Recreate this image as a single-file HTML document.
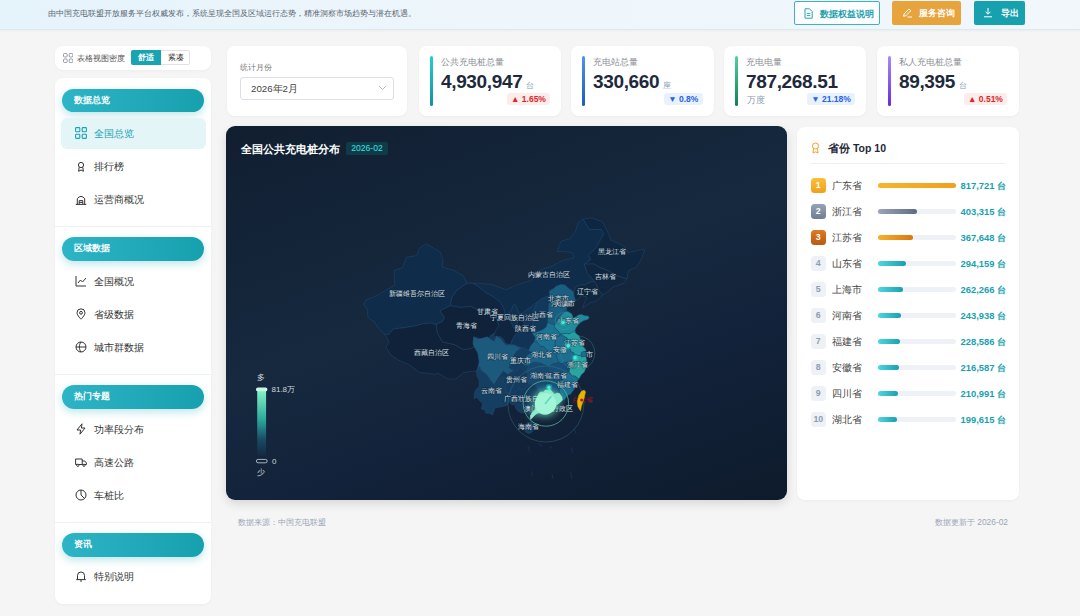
<!DOCTYPE html>
<html><head><meta charset="utf-8">
<style>
*{margin:0;padding:0;box-sizing:border-box}
html,body{width:1080px;height:616px;overflow:hidden;background:#f5f5f5;font-family:"Liberation Sans",sans-serif;position:relative}
.abs{position:absolute}
.topbar{left:0;top:0;width:1080px;height:30px;background:linear-gradient(90deg,#e5f3fb,#eef6fb 45%,#f1f7fb);border-bottom:1px solid #dae9f2;box-shadow:0 1px 3px rgba(0,0,0,.04)}
.topbar .msg{left:48px;top:8px;font-size:8.3px;color:#5a6472;white-space:nowrap;line-height:11px}
.btn{top:1px;height:23.5px;border-radius:2px;font-size:8.5px;font-weight:bold;line-height:25px;white-space:nowrap}
.b1{left:794px;width:86px;border:1px solid #3fb2bd;background:#fbfdfe;color:#1e9fad}
.b2{left:892px;width:69px;background:#e7a33c;color:#fff}
.b3{left:974px;width:51px;background:#17a1ae;color:#fff}
.card{background:#fff;border-radius:8px;box-shadow:0 1px 3px rgba(0,0,0,.04)}
.side-item{left:0;width:156px;height:31px}
.side-item .ic{position:absolute;left:20px;top:9px;width:12px;height:12px}
.side-item .tx{position:absolute;left:39px;top:0;line-height:31px;font-size:10px;color:#333}
.pill{left:7px;width:142px;height:23.5px;border-radius:12px;background:linear-gradient(90deg,#2db4c6,#17a0ae);box-shadow:0 3px 8px rgba(23,160,174,.28);color:#fff;font-size:8.5px;font-weight:bold;line-height:23.5px;padding-left:12px}
.sep{left:0;width:156px;height:1px;background:#eef1f4}
.stat .bar{position:absolute;left:11px;top:10px;width:2.5px;height:49.5px;border-radius:2px}
.stat .lbl{position:absolute;left:22px;top:10px;font-size:9px;color:#8b8f96;line-height:12px;white-space:nowrap}
.stat .num{position:absolute;left:22px;top:23.6px;font-size:19px;font-weight:bold;color:#1e293b;line-height:24px;white-space:nowrap;letter-spacing:-0.35px}
.stat .unit{font-size:8px;color:#8aa0b6;font-weight:normal;margin-left:4px;letter-spacing:0}
.stat .badge{position:absolute;top:47px;height:12px;border-radius:3px;font-size:8.5px;font-weight:bold;line-height:12px;text-align:center;white-space:nowrap}
.up{background:#fdecec;color:#dc2626}
.down{background:#e9f1fd;color:#2563eb}
.row{left:13px;width:196px;height:16px}
.rk{position:absolute;left:.6px;top:-.2px;width:15.4px;height:15.4px;border-radius:3.5px;font-size:8.8px;font-weight:bold;text-align:center;line-height:15.4px}
.pn{position:absolute;left:22px;top:0;font-size:9.5px;color:#444;line-height:15px;white-space:nowrap}
.trk{position:absolute;left:68px;top:4.6px;width:77.5px;height:5.8px;border-radius:3px;background:#eef2f7}
.fil{position:absolute;left:0;top:0;height:5.8px;border-radius:3px}
.val{position:absolute;right:0;top:0;font-size:9.4px;font-weight:bold;color:#17a2b0;line-height:15px;white-space:nowrap}
</style></head>
<body>
<!-- top bar -->
<div class="abs topbar">
  <div class="abs msg">由中国充电联盟开放服务平台权威发布，系统呈现全国及区域运行态势，精准洞察市场趋势与潜在机遇。</div>
  <div class="abs btn b1"><svg class="abs" style="left:9px;top:6px" width="9" height="11" viewBox="0 0 9 11"><path d="M1 .8h4.5L8.2 3.5v6.7H1z" fill="none" stroke="#2aa7b4" stroke-width="1"/><path d="M2.8 5.5h3.5M2.8 7.5h3.5" stroke="#2aa7b4" stroke-width=".9"/></svg><span class="abs" style="left:25px;top:0">数据权益说明</span></div>
  <div class="abs btn b2"><svg class="abs" style="left:10px;top:6px" width="11" height="11" viewBox="0 0 11 11"><path d="M1.5 9.2l.5-2.2L7 2l1.8 1.8-5 5z" fill="none" stroke="#fff" stroke-width="1"/><path d="M5.5 10h4.5" stroke="#fff" stroke-width="1"/></svg><span class="abs" style="left:27px;top:0">服务咨询</span></div>
  <div class="abs btn b3"><svg class="abs" style="left:9px;top:6px" width="10" height="11" viewBox="0 0 10 11"><path d="M5 1v6M2.6 4.8L5 7.2l2.4-2.4M1 9.8h8" fill="none" stroke="#fff" stroke-width="1"/></svg><span class="abs" style="left:27px;top:0">导出</span></div>
</div>

<!-- sidebar toggle -->
<div class="abs card" style="left:55px;top:46px;width:156px;height:24px">
  <svg class="abs" style="left:7.5px;top:7.3px" width="10.5" height="10" viewBox="0 0 10.5 10"><g fill="none" stroke="#8a909a" stroke-width=".9"><rect x=".5" y=".5" width="3.7" height="3.5" rx="1"/><rect x="6.2" y=".5" width="3.7" height="3.5" rx="1"/><rect x=".5" y="6" width="3.7" height="3.5" rx="1"/><rect x="6.2" y="6" width="3.7" height="3.5" rx="1"/></g></svg>
  <div class="abs" style="left:22px;top:6.5px;font-size:8px;color:#555;line-height:12px;white-space:nowrap">表格视图密度</div>
  <div class="abs" style="left:76px;top:4px;width:59px;height:15px;border:1px solid #dfe3e8;border-radius:2px;background:#fff"></div>
  <div class="abs" style="left:76px;top:4px;width:30px;height:15px;background:#1aa3b1;border-radius:2px 0 0 2px;color:#fff;font-size:8px;font-weight:bold;line-height:15.5px;text-align:center">舒适</div>
  <div class="abs" style="left:106px;top:4px;width:29px;height:15px;color:#333;font-size:8px;line-height:15px;text-align:center">紧凑</div>
</div>

<!-- sidebar nav -->
<div class="abs card" style="left:55px;top:78px;width:156px;height:526px">
  <div class="abs pill" style="top:10.5px">数据总览</div>
  <div class="abs" style="left:6px;top:40px;width:145px;height:31px;border-radius:6px;background:#e4f5f8"></div>
  <div class="abs side-item" style="top:40px"><svg class="ic" viewBox="0 0 12 12"><g fill="none" stroke="#1aa3b1" stroke-width="1.1"><rect x=".6" y=".6" width="4.2" height="4.2" rx=".8"/><rect x="7.2" y=".6" width="4.2" height="4.2" rx=".8"/><rect x=".6" y="7.2" width="4.2" height="4.2" rx=".8"/><rect x="7.2" y="7.2" width="4.2" height="4.2" rx=".8"/></g></svg><span class="tx" style="color:#1aa3b1">全国总览</span></div>
  <div class="abs side-item" style="top:73px"><svg class="ic" viewBox="0 0 12 12"><g fill="none" stroke="#333" stroke-width="1"><circle cx="6" cy="5" r="2.6"/><path d="M4.2 7.2L3.6 11.3l2.4-1.3 2.4 1.3-.6-4.1"/></g></svg><span class="tx">排行榜</span></div>
  <div class="abs side-item" style="top:106px"><svg class="ic" viewBox="0 0 12 12"><g fill="none" stroke="#333" stroke-width="1"><path d="M.8 11.4h10.4M2.3 11.2V5.6Q6 1.2 9.7 5.6v5.6M4.2 11.2V7.6h3.6v3.6M4.2 9.4h3.6"/></g></svg><span class="tx">运营商概况</span></div>
  <div class="abs sep" style="top:148px"></div>
  <div class="abs pill" style="top:159px">区域数据</div>
  <div class="abs side-item" style="top:188px"><svg class="ic" viewBox="0 0 12 12"><g fill="none" stroke="#333" stroke-width="1"><path d="M1 1v10h10M3 8l2.5-3 2 2L11 3"/></g></svg><span class="tx">全国概况</span></div>
  <div class="abs side-item" style="top:221px"><svg class="ic" viewBox="0 0 12 12"><g fill="none" stroke="#333" stroke-width="1"><path d="M6 11.2S2 7.3 2 4.8a4 4 0 0 1 8 0C10 7.3 6 11.2 6 11.2z"/><circle cx="6" cy="4.8" r="1.4"/></g></svg><span class="tx">省级数据</span></div>
  <div class="abs side-item" style="top:254px"><svg class="ic" viewBox="0 0 12 12"><g fill="none" stroke="#333" stroke-width="1"><circle cx="6" cy="6" r="5"/><path d="M1 6h10M6 1c-2.2 2.6-2.2 7.4 0 10"/></g></svg><span class="tx">城市群数据</span></div>
  <div class="abs sep" style="top:296px"></div>
  <div class="abs pill" style="top:307px">热门专题</div>
  <div class="abs side-item" style="top:336px"><svg class="ic" viewBox="0 0 12 12"><g fill="none" stroke="#333" stroke-width="1" stroke-linejoin="round"><path d="M7 .8L2 7h3.6L5 11.2 10 5H6.4z"/></g></svg><span class="tx">功率段分布</span></div>
  <div class="abs side-item" style="top:369px"><svg class="ic" viewBox="0 0 12 12"><g fill="none" stroke="#333" stroke-width="1"><path d="M.6 3h6.6v5.5H.6zM7.2 5h2.6l1.6 2v1.5H7.2"/><circle cx="2.8" cy="9.3" r="1.1" fill="#fff"/><circle cx="9" cy="9.3" r="1.1" fill="#fff"/></g></svg><span class="tx">高速公路</span></div>
  <div class="abs side-item" style="top:402px"><svg class="ic" viewBox="0 0 12 12"><g fill="none" stroke="#333" stroke-width="1"><circle cx="6" cy="6" r="5"/><path d="M6 1v5l3.5 3.5"/></g></svg><span class="tx">车桩比</span></div>
  <div class="abs sep" style="top:444px"></div>
  <div class="abs pill" style="top:455px">资讯</div>
  <div class="abs side-item" style="top:483px"><svg class="ic" viewBox="0 0 12 12"><g fill="none" stroke="#333" stroke-width="1"><path d="M2.5 9V5.5a3.5 3.5 0 0 1 7 0V9l1 .6h-9z"/><path d="M5 11h2"/></g></svg><span class="tx">特别说明</span></div>
</div>

<!-- month select card -->
<div class="abs card" style="left:227px;top:46px;width:180px;height:70px">
  <div class="abs" style="left:13px;top:16px;font-size:8px;color:#777;line-height:12px">统计月份</div>
  <div class="abs" style="left:13px;top:31px;width:154px;height:23px;border:1px solid #dcdfe6;border-radius:3px"></div>
  <div class="abs" style="left:24px;top:36px;font-size:9.7px;color:#444;line-height:13px">2026年2月</div>
  <svg class="abs" style="left:151px;top:39px" width="9" height="6" viewBox="0 0 9 6"><path d="M1 1l3.5 3.5L8 1" fill="none" stroke="#b8bec8" stroke-width="1"/></svg>
</div>

<!-- stat cards -->
<div class="abs card stat" style="left:419px;top:46px;width:142px;height:70px">
  <div class="bar" style="background:linear-gradient(#20d0d0,#1590a0)"></div>
  <div class="lbl">公共充电桩总量</div>
  <div class="num">4,930,947<span class="unit">台</span></div>
  <div class="badge up" style="left:88px;width:43px">▲ 1.65%</div>
</div>
<div class="abs card stat" style="left:571px;top:46px;width:143px;height:70px">
  <div class="bar" style="background:linear-gradient(#4d94ea,#1a5cc0)"></div>
  <div class="lbl">充电站总量</div>
  <div class="num">330,660<span class="unit">座</span></div>
  <div class="badge down" style="left:93px;width:38.5px">▼ 0.8%</div>
</div>
<div class="abs card stat" style="left:724px;top:46px;width:142px;height:70px">
  <div class="bar" style="background:linear-gradient(#4fd39c,#0a8458)"></div>
  <div class="lbl">充电电量</div>
  <div class="num">787,268.51</div>
  <div class="abs" style="left:23px;top:48px;font-size:8.5px;color:#8b9bb0;line-height:12px">万度</div>
  <div class="badge down" style="left:83px;width:48px">▼ 21.18%</div>
</div>
<div class="abs card stat" style="left:877px;top:46px;width:142px;height:70px">
  <div class="bar" style="background:linear-gradient(#a58bf8,#6a2ae0)"></div>
  <div class="lbl">私人充电桩总量</div>
  <div class="num">89,395<span class="unit">台</span></div>
  <div class="badge up" style="left:87px;width:43px">▲ 0.51%</div>
</div>

<!-- map panel -->
<div class="abs" id="map" style="left:226px;top:126px;width:561px;height:374px;border-radius:9px;background:linear-gradient(160deg,#111e30 0%,#16293f 45%,#12223a 68%,#0e1b2c 100%);box-shadow:0 4px 10px rgba(0,0,0,.12);overflow:hidden">
  <div class="abs" style="left:15px;top:16px;font-size:10.8px;font-weight:bold;color:#fff;line-height:14px;white-space:nowrap">全国公共充电桩分布</div>
  <div class="abs" style="left:120px;top:16px;width:42px;height:13px;border-radius:2px;background:#0f3b48;color:#3fe0e4;font-size:8.6px;line-height:13px;text-align:center">2026-02</div>
  <svg class="abs" style="left:0;top:0" width="561" height="374" viewBox="226 126 561 374">
<defs><filter id="gl" x="-50%" y="-50%" width="200%" height="200%"><feGaussianBlur stdDeviation="3"/></filter><linearGradient id="vm" x1="0" y1="0" x2="0" y2="1"><stop offset="0" stop-color="#86f5c6"/><stop offset=".45" stop-color="#2aa89c"/><stop offset=".75" stop-color="#1a4a66"/><stop offset="1" stop-color="#14283e"/></linearGradient></defs>
<path d="M472.2,283.2 L467.1,283.2 L463.6,276.1 L454.6,270.7 L442.1,267.1 L443.0,260.0 L440.4,252.0 L431.4,246.6 L426.1,243.9 L418.9,248.4 L417.1,255.5 L406.4,257.3 L402.9,267.1 L393.9,270.7 L394.8,285.0 L379.6,293.9 L372.5,297.5 L366.0,299.7 L363.4,304.3 L367.3,309.5 L367.9,317.3 L374.4,322.5 L379.0,329.0 L384.8,334.2 L389.4,342.0 L386.1,347.1 L390.6,354.9 L398.4,360.1 L409.1,364.7 L419.5,372.5 L426.0,373.1 L435.1,374.4 L437.7,373.1 L448.0,379.0 L455.8,379.0 L463.6,372.5 L472.7,371.2 L476.6,371.2 L476.6,371.2 L476.8,371.2 L476.8,376.0 L479.1,379.7 L479.1,386.4 L475.9,389.5 L474.5,393.2 L474.0,398.7 L476.8,397.4 L479.5,400.5 L482.7,403.5 L481.4,409.0 L484.6,409.7 L486.0,413.3 L490.1,413.3 L492.4,415.2 L495.1,407.8 L498.8,407.2 L502.9,406.6 L506.6,405.4 L509.4,401.7 L511.7,404.8 L515.3,404.8 L515.8,408.4 L518.5,411.5 L521.8,413.0 L524.0,412.7 L526.8,413.3 L531.6,413.3 L530.3,416.0 L530.6,419.6 L533.0,417.0 L536.0,414.0 L539.0,412.8 L543.0,414.2 L548.0,414.0 L553.0,410.0 L556.0,405.5 L560.0,402.5 L563.3,399.2 L564.0,400.5 L565.8,398.0 L568.1,395.0 L570.4,394.4 L572.2,391.9 L574.5,388.9 L575.0,385.2 L576.8,382.2 L578.7,379.1 L579.6,377.9 L581.4,374.8 L584.6,371.8 L586.0,367.5 L587.4,364.4 L586.9,361.4 L586.0,356.2 L586.9,353.4 L584.8,351.5 L586.5,351.0 L585.1,348.6 L582.8,346.1 L581.9,341.8 L579.1,335.7 L575.9,333.3 L575.0,330.2 L576.4,327.2 L578.7,324.4 L581.0,322.3 L584.2,320.4 L587.9,319.5 L589.2,317.4 L588.3,315.9 L584.2,315.6 L581.4,314.3 L578.2,314.9 L575.9,316.8 L573.2,317.7 L571.8,313.7 L567.7,311.3 L566.7,311.3 L566.7,307.0 L569.0,306.4 L572.2,305.2 L575.5,300.6 L578.7,299.1 L581.4,295.4 L586.9,297.2 L584.2,303.3 L582.6,307.9 L590.6,302.7 L596.1,301.2 L601.2,297.2 L602.5,295.0 L605.5,293.6 L613.4,286.8 L623.6,283.4 L627.0,278.9 L628.2,270.9 L636.1,267.5 L641.8,258.4 L644.7,249.3 L637.3,250.5 L628.2,252.7 L623.6,245.9 L611.1,240.2 L607.8,232.1 L602.6,221.7 L590.9,217.8 L583.1,219.1 L577.9,223.0 L575.3,232.1 L570.1,238.6 L561.0,241.2 L557.1,251.6 L564.9,251.6 L572.7,252.9 L574.0,258.0 L562.3,260.6 L551.7,266.4 L538.7,270.3 L530.9,280.6 L517.9,284.5 L506.2,289.7 L492.0,284.5 L479.0,283.2 L472.2,283.2 L472.2,283.2Z" fill="#143a5e"/>
<path d="M530.8,421.8 L530.8,421.9 L527.3,422.5 L524.5,427.4 L525.0,431.6 L528.2,433.5 L530.9,432.9 L533.7,429.8 L535.5,424.9 L533.7,422.5 L530.8,421.8Z" fill="#143a5e"/>
<path d="M363.4,304.3 L366.0,299.7 L372.5,297.5 L379.6,293.9 L394.8,285.0 L393.9,270.7 L402.9,267.1 L406.4,257.3 L417.1,255.5 L418.9,248.4 L426.1,243.9 L431.4,246.6 L440.4,252.0 L443.0,260.0 L442.1,267.1 L454.6,270.7 L463.6,276.1 L467.1,283.2 L456.9,290.0 L451.7,297.8 L450.4,305.6 L440.0,310.8 L444.5,317.3 L442.6,321.2 L436.1,324.4 L430.9,323.1 L423.1,323.8 L412.7,326.4 L403.6,327.7 L393.2,329.0 L388.7,334.8 L384.8,334.2 L379.0,329.0 L374.4,322.5 L367.9,317.3 L367.3,309.5Z" fill="#0f2c4a" stroke="#25466a" stroke-width="0.5" stroke-linejoin="round"/>
<path d="M384.8,334.2 L388.7,334.8 L393.2,329.0 L403.6,327.7 L412.7,326.4 L423.1,323.8 L430.9,323.1 L436.1,324.4 L437.4,332.9 L442.6,342.0 L454.3,344.5 L463.4,349.7 L471.2,348.4 L474.0,346.5 L477.9,353.0 L479.2,362.1 L477.9,367.9 L476.6,371.2 L472.7,371.2 L463.6,372.5 L455.8,379.0 L448.0,379.0 L437.7,373.1 L435.1,374.4 L426.0,373.1 L419.5,372.5 L409.1,364.7 L398.4,360.1 L390.6,354.9 L386.1,347.1 L389.4,342.0Z" fill="#0f2239" stroke="#25466a" stroke-width="0.5" stroke-linejoin="round"/>
<path d="M436.1,324.4 L442.6,321.2 L444.5,317.3 L440.0,310.8 L450.4,305.6 L460.5,307.3 L470.7,306.1 L477.5,309.5 L485.5,308.4 L490.0,314.1 L495.7,317.5 L499.1,325.5 L495.7,332.3 L490.0,335.7 L487.7,340.2 L480.9,339.1 L474.1,336.8 L473.0,343.6 L474.0,346.5 L471.2,348.4 L463.4,349.7 L454.3,344.5 L442.6,342.0 L437.4,332.9Z" fill="#0f2239" stroke="#25466a" stroke-width="0.5" stroke-linejoin="round"/>
<path d="M467.1,283.2 L479.0,283.2 L492.0,284.5 L506.2,289.7 L517.9,284.5 L530.9,280.6 L538.7,270.3 L551.7,266.4 L562.3,260.6 L574.0,258.0 L572.7,252.9 L564.9,251.6 L557.1,251.6 L561.0,241.2 L570.1,238.6 L575.3,232.1 L577.9,223.0 L583.1,219.1 L589.6,229.5 L601.3,229.5 L603.9,233.4 L596.1,247.7 L588.3,255.5 L590.9,259.4 L584.4,264.1 L587.3,273.2 L594.1,281.1 L588.8,282.6 L584.6,285.0 L579.6,285.0 L575.9,286.8 L573.6,291.7 L569.0,288.7 L564.9,285.0 L560.8,284.4 L556.2,286.2 L553.4,288.7 L549.3,291.1 L549.8,296.0 L546.5,296.6 L542.0,298.5 L536.4,302.7 L531.9,306.4 L526.3,310.1 L523.1,313.1 L519.9,313.7 L517.6,310.7 L516.2,306.4 L514.4,304.0 L513.0,305.8 L511.7,309.5 L508.9,313.7 L505.2,315.6 L503.9,308.8 L500.6,302.7 L493.3,296.6 L486.0,293.0 L478.1,286.2 L472.2,283.2Z" fill="#0f2c4a" stroke="#25466a" stroke-width="0.5" stroke-linejoin="round"/>
<path d="M467.1,283.2 L472.2,283.2 L478.1,286.2 L486.0,293.0 L493.3,296.6 L500.6,302.7 L503.9,308.8 L505.2,315.6 L508.0,316.8 L511.7,323.5 L514.0,328.4 L516.2,326.6 L518.5,319.2 L524.0,322.3 L524.5,329.0 L519.9,331.4 L515.3,334.5 L512.6,339.4 L510.3,344.9 L505.2,343.1 L503.4,338.8 L499.7,336.3 L496.5,337.6 L493.8,335.7 L496.1,330.2 L497.9,327.2 L499.1,325.5 L495.7,317.5 L490.0,314.1 L485.5,308.4 L477.5,309.5 L470.7,306.1 L460.5,307.3 L450.4,305.6 L451.7,297.8 L457.0,289.9Z" fill="#0f2540" stroke="#25466a" stroke-width="0.5" stroke-linejoin="round"/>
<path d="M590.9,217.8 L602.6,221.7 L607.8,232.1 L611.1,240.2 L623.6,245.9 L628.2,252.7 L637.3,250.5 L644.7,249.3 L641.8,258.4 L636.1,267.5 L628.2,270.9 L627.0,278.9 L615.7,275.5 L608.9,270.9 L599.8,267.5 L594.1,264.1 L584.4,264.1 L590.9,259.4 L588.3,255.5 L596.1,247.7 L603.9,233.4 L601.3,229.5 L589.6,229.5 L583.1,219.1Z" fill="#0f2640" stroke="#25466a" stroke-width="0.5" stroke-linejoin="round"/>
<path d="M584.4,264.1 L594.1,264.1 L599.8,267.5 L608.9,270.9 L615.7,275.5 L627.0,278.9 L623.6,283.4 L613.4,286.8 L605.5,293.6 L602.5,295.0 L598.6,290.0 L596.0,284.0 L594.1,281.1 L587.3,273.2Z" fill="#10263f" stroke="#25466a" stroke-width="0.5" stroke-linejoin="round"/>
<path d="M594.1,281.1 L596.0,284.0 L598.6,290.0 L602.5,295.0 L601.2,297.2 L596.1,301.2 L590.6,302.7 L582.6,307.9 L584.2,303.3 L586.9,297.2 L581.4,295.4 L578.7,299.1 L575.5,300.6 L574.1,296.6 L573.6,291.7 L575.9,286.8 L579.6,285.0 L584.6,285.0 L588.8,282.6Z" fill="#10283f" stroke="#25466a" stroke-width="0.5" stroke-linejoin="round"/>
<path d="M514.4,304.0 L516.2,306.4 L517.6,310.7 L519.9,313.7 L518.5,319.2 L516.2,326.6 L514.0,328.4 L511.7,323.5 L508.0,316.8 L505.2,315.6 L508.9,313.7 L511.7,309.5 L513.0,305.8Z" fill="#10304f" stroke="#25466a" stroke-width="0.5" stroke-linejoin="round"/>
<path d="M535.1,303.0 L536.4,304.6 L533.2,311.9 L533.2,318.6 L532.8,323.5 L533.7,327.8 L532.3,333.3 L535.5,337.6 L534.1,341.8 L530.9,345.5 L528.6,350.4 L524.0,347.9 L518.5,346.7 L514.9,344.9 L510.3,344.9 L512.6,339.4 L515.3,334.5 L519.9,331.4 L524.5,329.0 L524.0,322.3 L518.5,319.2 L519.9,313.7 L523.1,313.1 L526.3,310.1 L531.9,306.4Z" fill="#113355" stroke="#25466a" stroke-width="0.5" stroke-linejoin="round"/>
<path d="M536.4,302.7 L542.0,298.5 L546.5,296.6 L549.8,296.0 L550.7,300.9 L548.8,304.6 L548.8,308.8 L547.5,315.6 L547.9,322.3 L546.1,327.2 L542.9,329.6 L540.1,330.8 L536.4,332.1 L532.3,333.3 L533.7,327.8 L532.8,323.5 L533.2,318.6 L533.2,311.9 L536.4,304.6Z" fill="#12395c" stroke="#25466a" stroke-width="0.5" stroke-linejoin="round"/>
<path d="M549.8,296.0 L549.3,291.1 L553.4,288.7 L556.2,286.2 L560.8,284.4 L564.9,285.0 L569.0,288.7 L573.6,291.7 L574.1,296.6 L575.5,300.6 L572.2,305.2 L569.0,306.4 L566.7,307.0 L566.7,310.1 L565.8,311.3 L562.6,313.7 L559.4,316.8 L555.7,323.5 L553.4,324.4 L551.1,324.1 L547.9,322.3 L547.5,315.6 L548.8,308.8 L548.8,304.6 L550.7,300.9Z" fill="#1a5e82" stroke="#25466a" stroke-width="0.5" stroke-linejoin="round"/>
<path d="M555.7,302.7 L556.6,299.1 L558.5,296.6 L560.3,294.2 L563.5,294.8 L565.4,296.6 L564.4,299.1 L562.6,302.1 L560.3,303.6Z" fill="#1b6a8c" stroke="#25466a" stroke-width="0.5" stroke-linejoin="round"/>
<path d="M562.1,308.8 L565.8,308.8 L567.2,305.2 L566.7,302.7 L565.8,299.1 L564.0,299.7 L564.0,302.7 L562.6,305.8Z" fill="#1b6a8c" stroke="#25466a" stroke-width="0.5" stroke-linejoin="round"/>
<path d="M555.7,323.5 L559.4,316.8 L562.6,313.7 L565.8,311.3 L567.7,311.3 L571.8,313.7 L573.2,317.7 L575.9,316.8 L578.2,314.9 L581.4,314.3 L584.2,315.6 L588.3,315.9 L589.2,317.4 L587.9,319.5 L584.2,320.4 L581.0,322.3 L578.7,324.4 L576.4,327.2 L575.0,330.2 L575.9,333.3 L569.5,333.9 L566.7,333.3 L563.1,333.9 L560.3,333.9 L558.5,331.4 L556.2,329.6 L553.9,326.6Z" fill="#1e8c9c" stroke="#25466a" stroke-width="0.5" stroke-linejoin="round"/>
<path d="M532.3,333.3 L536.4,332.1 L540.1,330.8 L542.9,329.6 L546.1,327.2 L547.9,322.3 L551.1,324.1 L553.4,324.4 L555.7,323.5 L553.9,326.6 L556.2,329.6 L558.5,331.4 L560.3,333.9 L559.4,336.3 L556.2,336.9 L555.7,340.0 L554.8,344.3 L556.6,347.3 L555.3,350.4 L551.6,351.0 L549.3,351.6 L547.0,350.4 L543.8,346.7 L540.1,346.1 L536.9,341.8 L534.1,341.8 L535.5,337.6Z" fill="#1b7494" stroke="#25466a" stroke-width="0.5" stroke-linejoin="round"/>
<path d="M473.6,336.8 L478.2,339.1 L487.3,336.8 L494.1,341.4 L496.4,335.7 L500.9,339.1 L505.5,344.8 L513.4,344.8 L521.4,348.2 L523.6,352.7 L514.5,358.4 L508.9,367.5 L513.4,370.9 L507.7,374.3 L503.2,370.9 L499.8,375.5 L494.1,384.5 L488.4,377.7 L482.7,370.9 L476.6,371.2 L477.9,367.9 L479.2,362.1 L477.9,353.0 L474.0,346.5 L473.0,343.6Z" fill="#1b5a7c" stroke="#25466a" stroke-width="0.5" stroke-linejoin="round"/>
<path d="M509.4,363.8 L512.6,357.7 L516.2,351.6 L519.9,348.6 L524.0,347.9 L528.6,350.4 L531.9,352.8 L527.3,355.3 L524.5,358.9 L523.6,365.1 L527.3,367.5 L526.3,371.8 L524.0,371.2 L521.8,368.1 L519.0,367.5 L517.2,371.2 L514.4,369.9 L511.7,369.9 L510.3,367.5Z" fill="#143f64" stroke="#25466a" stroke-width="0.5" stroke-linejoin="round"/>
<path d="M530.9,345.5 L534.1,341.8 L536.9,341.8 L540.1,346.1 L543.8,346.7 L547.0,350.4 L549.3,351.6 L551.6,351.0 L555.3,350.4 L557.6,353.4 L556.2,356.5 L558.0,359.6 L558.9,362.6 L556.2,363.2 L553.0,363.8 L548.8,366.9 L544.7,365.1 L542.0,363.8 L535.5,362.0 L532.8,362.6 L528.2,365.7 L523.6,365.1 L524.5,358.9 L527.3,355.3 L531.9,352.8 L528.6,350.4Z" fill="#1a6488" stroke="#25466a" stroke-width="0.5" stroke-linejoin="round"/>
<path d="M560.3,334.5 L563.1,335.7 L566.7,337.6 L569.0,340.6 L572.2,345.5 L569.9,347.3 L570.9,351.6 L573.2,352.2 L575.0,354.4 L573.6,355.9 L573.2,358.9 L571.3,361.4 L568.1,363.8 L564.9,362.0 L562.1,363.8 L558.9,362.6 L558.0,359.6 L556.2,356.5 L557.6,353.4 L555.3,350.4 L556.6,347.3 L554.8,344.3 L555.7,340.0 L556.2,336.9 L559.4,336.3Z" fill="#1b6e90" stroke="#25466a" stroke-width="0.5" stroke-linejoin="round"/>
<path d="M560.3,334.5 L563.1,333.9 L566.7,333.3 L569.5,333.9 L573.6,331.4 L575.9,333.3 L579.1,335.7 L581.9,341.8 L582.8,346.1 L585.1,348.6 L586.5,351.0 L582.3,352.2 L581.0,355.3 L578.7,355.6 L575.0,354.4 L573.2,352.2 L570.9,351.6 L569.9,347.3 L572.2,345.5 L569.0,340.6 L566.7,337.6 L563.1,335.7Z" fill="#24a0a4" stroke="#25466a" stroke-width="0.5" stroke-linejoin="round"/>
<path d="M581.4,352.2 L584.6,351.3 L586.9,353.4 L586.0,356.2 L581.4,357.1 L581.0,355.3Z" fill="#1a6f8e" stroke="#25466a" stroke-width="0.5" stroke-linejoin="round"/>
<path d="M575.0,354.4 L578.7,355.6 L581.0,355.3 L581.4,357.1 L586.0,356.2 L586.9,361.4 L587.4,364.4 L586.0,367.5 L584.6,371.8 L581.4,374.8 L579.6,377.9 L578.7,379.1 L575.0,376.0 L571.8,376.0 L569.0,371.8 L569.9,366.3 L568.1,363.8 L571.3,361.4 L573.2,358.9 L573.6,355.9Z" fill="#28a7a0" stroke="#25466a" stroke-width="0.5" stroke-linejoin="round"/>
<path d="M528.2,365.7 L532.8,362.6 L535.5,362.0 L542.0,363.8 L544.7,365.1 L548.8,366.9 L547.9,369.9 L550.2,374.8 L548.8,378.5 L549.8,382.8 L548.4,386.4 L549.8,390.7 L547.9,390.1 L545.6,389.2 L542.9,391.9 L539.7,393.5 L536.9,388.3 L535.1,385.2 L532.3,384.6 L529.1,384.0 L527.7,385.8 L528.6,382.2 L525.4,379.1 L527.7,374.8 L526.3,371.8 L527.3,367.5Z" fill="#164a70" stroke="#25466a" stroke-width="0.5" stroke-linejoin="round"/>
<path d="M548.8,366.9 L553.0,363.8 L556.2,363.2 L558.9,362.6 L562.1,363.8 L564.9,362.0 L568.1,363.8 L569.9,366.3 L569.0,371.8 L565.4,374.2 L562.6,379.1 L560.8,383.4 L558.9,387.0 L559.9,391.9 L560.8,394.4 L558.0,393.2 L555.3,394.4 L552.5,392.5 L549.8,390.7 L548.4,386.4 L549.8,382.8 L548.8,378.5 L550.2,374.8 L547.9,369.9Z" fill="#16507a" stroke="#25466a" stroke-width="0.5" stroke-linejoin="round"/>
<path d="M569.0,371.8 L571.8,376.0 L575.0,376.0 L578.7,379.1 L576.8,382.2 L575.0,385.2 L574.5,388.9 L572.2,391.9 L570.4,394.4 L568.1,395.0 L565.8,398.0 L564.0,400.5 L562.6,398.0 L560.8,394.4 L559.9,391.9 L558.9,387.0 L560.8,383.4 L562.6,379.1 L565.4,374.2Z" fill="#1a7092" stroke="#25466a" stroke-width="0.5" stroke-linejoin="round"/>
<path d="M502.0,379.7 L504.8,377.9 L509.4,374.2 L513.5,373.6 L514.4,369.9 L517.2,371.2 L519.0,367.5 L521.8,368.1 L524.0,371.2 L526.3,371.8 L527.7,374.8 L525.4,379.1 L528.6,382.2 L527.7,385.8 L525.0,388.3 L522.2,389.5 L518.5,388.9 L515.3,391.3 L512.1,393.8 L508.0,392.5 L505.7,393.2 L506.1,388.3 L505.2,384.0 L502.5,382.2Z" fill="#153c60" stroke="#25466a" stroke-width="0.5" stroke-linejoin="round"/>
<path d="M476.8,371.2 L479.5,366.3 L481.8,371.8 L485.5,373.6 L488.7,377.3 L490.5,382.2 L493.8,385.2 L497.4,383.4 L498.8,379.1 L502.0,376.7 L504.8,377.9 L502.0,379.7 L502.5,382.2 L505.2,384.0 L506.1,388.3 L505.7,393.2 L508.0,392.5 L512.1,393.8 L511.7,398.0 L508.9,402.3 L506.6,405.4 L502.9,406.6 L498.8,407.2 L495.1,407.8 L492.4,415.2 L490.1,413.3 L486.0,413.3 L484.6,409.7 L481.4,409.0 L482.7,403.5 L479.5,400.5 L476.8,397.4 L474.0,398.7 L474.5,393.2 L475.9,389.5 L479.1,386.4 L479.1,379.7 L476.8,376.0Z" fill="#153f62" stroke="#25466a" stroke-width="0.5" stroke-linejoin="round"/>
<path d="M508.0,392.5 L512.1,393.8 L515.3,391.3 L518.5,388.9 L522.2,389.5 L525.0,388.3 L527.7,385.8 L529.1,384.0 L532.3,384.6 L535.1,385.2 L536.9,388.3 L539.7,393.5 L537.4,396.2 L538.3,399.9 L537.4,404.8 L534.6,408.4 L532.3,410.9 L530.0,413.3 L526.8,413.3 L524.0,412.7 L521.8,413.0 L518.5,411.5 L515.8,408.4 L515.3,404.8 L511.7,404.8 L510.3,402.9 L511.7,398.0Z" fill="#143a5e" stroke="#25466a" stroke-width="0.5" stroke-linejoin="round"/>
<path d="M524.5,427.4 L527.3,422.5 L530.9,421.9 L533.7,422.5 L535.5,424.9 L533.7,429.8 L530.9,432.9 L528.2,433.5 L525.0,431.7Z" fill="#173f66" stroke="#25466a" stroke-width="0.5" stroke-linejoin="round"/>
<text x="612.3" y="253.8" font-size="6.6" fill="#dde4ec" stroke="#0e1c2e" stroke-width="1.1" stroke-opacity=".55" paint-order="stroke" text-anchor="middle" font-family="Liberation Sans, sans-serif">黑龙江省</text>
<text x="548.6" y="277.40000000000003" font-size="6.6" fill="#dde4ec" stroke="#0e1c2e" stroke-width="1.1" stroke-opacity=".55" paint-order="stroke" text-anchor="middle" font-family="Liberation Sans, sans-serif">内蒙古自治区</text>
<text x="605.4" y="279.40000000000003" font-size="6.6" fill="#dde4ec" stroke="#0e1c2e" stroke-width="1.1" stroke-opacity=".55" paint-order="stroke" text-anchor="middle" font-family="Liberation Sans, sans-serif">吉林省</text>
<text x="416.7" y="295.6" font-size="6.6" fill="#dde4ec" stroke="#0e1c2e" stroke-width="1.1" stroke-opacity=".55" paint-order="stroke" text-anchor="middle" font-family="Liberation Sans, sans-serif">新疆维吾尔自治区</text>
<text x="587.9" y="294.0" font-size="6.6" fill="#dde4ec" stroke="#0e1c2e" stroke-width="1.1" stroke-opacity=".55" paint-order="stroke" text-anchor="middle" font-family="Liberation Sans, sans-serif">辽宁省</text>
<text x="558.7" y="300.90000000000003" font-size="6.6" fill="#dde4ec" stroke="#0e1c2e" stroke-width="1.1" stroke-opacity=".55" paint-order="stroke" text-anchor="middle" font-family="Liberation Sans, sans-serif">北京市</text>
<text x="561" y="305.8" font-size="6.6" fill="#dde4ec" stroke="#0e1c2e" stroke-width="1.1" stroke-opacity=".55" paint-order="stroke" text-anchor="middle" font-family="Liberation Sans, sans-serif">河北省</text>
<text x="564.5" y="305.8" font-size="6.6" fill="#dde4ec" stroke="#0e1c2e" stroke-width="1.1" stroke-opacity=".55" paint-order="stroke" text-anchor="middle" font-family="Liberation Sans, sans-serif">天津市</text>
<text x="487.7" y="313.90000000000003" font-size="6.6" fill="#dde4ec" stroke="#0e1c2e" stroke-width="1.1" stroke-opacity=".55" paint-order="stroke" text-anchor="middle" font-family="Liberation Sans, sans-serif">甘肃省</text>
<text x="514.1" y="320.0" font-size="6.6" fill="#dde4ec" stroke="#0e1c2e" stroke-width="1.1" stroke-opacity=".55" paint-order="stroke" text-anchor="middle" font-family="Liberation Sans, sans-serif">宁夏回族自治区</text>
<text x="542.5" y="317.2" font-size="6.6" fill="#dde4ec" stroke="#0e1c2e" stroke-width="1.1" stroke-opacity=".55" paint-order="stroke" text-anchor="middle" font-family="Liberation Sans, sans-serif">山西省</text>
<text x="568" y="323.3" font-size="6.6" fill="#dde4ec" stroke="#0e1c2e" stroke-width="1.1" stroke-opacity=".55" paint-order="stroke" text-anchor="middle" font-family="Liberation Sans, sans-serif">山东省</text>
<text x="466.6" y="328.1" font-size="6.6" fill="#dde4ec" stroke="#0e1c2e" stroke-width="1.1" stroke-opacity=".55" paint-order="stroke" text-anchor="middle" font-family="Liberation Sans, sans-serif">青海省</text>
<text x="525.4" y="331.40000000000003" font-size="6.6" fill="#dde4ec" stroke="#0e1c2e" stroke-width="1.1" stroke-opacity=".55" paint-order="stroke" text-anchor="middle" font-family="Liberation Sans, sans-serif">陕西省</text>
<text x="546.5" y="338.7" font-size="6.6" fill="#dde4ec" stroke="#0e1c2e" stroke-width="1.1" stroke-opacity=".55" paint-order="stroke" text-anchor="middle" font-family="Liberation Sans, sans-serif">河南省</text>
<text x="574.1" y="345.2" font-size="6.6" fill="#dde4ec" stroke="#0e1c2e" stroke-width="1.1" stroke-opacity=".55" paint-order="stroke" text-anchor="middle" font-family="Liberation Sans, sans-serif">江苏省</text>
<text x="431.7" y="354.90000000000003" font-size="6.6" fill="#dde4ec" stroke="#0e1c2e" stroke-width="1.1" stroke-opacity=".55" paint-order="stroke" text-anchor="middle" font-family="Liberation Sans, sans-serif">西藏自治区</text>
<text x="559.5" y="351.7" font-size="6.6" fill="#dde4ec" stroke="#0e1c2e" stroke-width="1.1" stroke-opacity=".55" paint-order="stroke" text-anchor="middle" font-family="Liberation Sans, sans-serif">安徽</text>
<text x="589.2" y="356.5" font-size="6.6" fill="#dde4ec" stroke="#0e1c2e" stroke-width="1.1" stroke-opacity=".55" paint-order="stroke" text-anchor="middle" font-family="Liberation Sans, sans-serif">市</text>
<text x="497" y="359.0" font-size="6.6" fill="#dde4ec" stroke="#0e1c2e" stroke-width="1.1" stroke-opacity=".55" paint-order="stroke" text-anchor="middle" font-family="Liberation Sans, sans-serif">四川省</text>
<text x="541.3" y="356.90000000000003" font-size="6.6" fill="#dde4ec" stroke="#0e1c2e" stroke-width="1.1" stroke-opacity=".55" paint-order="stroke" text-anchor="middle" font-family="Liberation Sans, sans-serif">湖北省</text>
<text x="520.6" y="363.40000000000003" font-size="6.6" fill="#dde4ec" stroke="#0e1c2e" stroke-width="1.1" stroke-opacity=".55" paint-order="stroke" text-anchor="middle" font-family="Liberation Sans, sans-serif">重庆市</text>
<text x="577" y="367.1" font-size="6.6" fill="#dde4ec" stroke="#0e1c2e" stroke-width="1.1" stroke-opacity=".55" paint-order="stroke" text-anchor="middle" font-family="Liberation Sans, sans-serif">浙江省</text>
<text x="540" y="378.40000000000003" font-size="6.6" fill="#dde4ec" stroke="#0e1c2e" stroke-width="1.1" stroke-opacity=".55" paint-order="stroke" text-anchor="middle" font-family="Liberation Sans, sans-serif">湖南省</text>
<text x="556" y="378.40000000000003" font-size="6.6" fill="#dde4ec" stroke="#0e1c2e" stroke-width="1.1" stroke-opacity=".55" paint-order="stroke" text-anchor="middle" font-family="Liberation Sans, sans-serif">江西省</text>
<text x="516.1" y="382.1" font-size="6.6" fill="#dde4ec" stroke="#0e1c2e" stroke-width="1.1" stroke-opacity=".55" paint-order="stroke" text-anchor="middle" font-family="Liberation Sans, sans-serif">贵州省</text>
<text x="567.6" y="387.40000000000003" font-size="6.6" fill="#dde4ec" stroke="#0e1c2e" stroke-width="1.1" stroke-opacity=".55" paint-order="stroke" text-anchor="middle" font-family="Liberation Sans, sans-serif">福建省</text>
<text x="491.8" y="393.0" font-size="6.6" fill="#dde4ec" stroke="#0e1c2e" stroke-width="1.1" stroke-opacity=".55" paint-order="stroke" text-anchor="middle" font-family="Liberation Sans, sans-serif">云南省</text>
<text x="528" y="401.2" font-size="6.6" fill="#dde4ec" stroke="#0e1c2e" stroke-width="1.1" stroke-opacity=".55" paint-order="stroke" text-anchor="middle" font-family="Liberation Sans, sans-serif">广西壮族自治区</text>
<text x="548.5" y="410.8" font-size="6.6" fill="#dde4ec" stroke="#0e1c2e" stroke-width="1.1" stroke-opacity=".55" paint-order="stroke" text-anchor="middle" font-family="Liberation Sans, sans-serif">澳门特别行政区</text>
<text x="528.3" y="428.8" font-size="6.6" fill="#dde4ec" stroke="#0e1c2e" stroke-width="1.1" stroke-opacity=".55" paint-order="stroke" text-anchor="middle" font-family="Liberation Sans, sans-serif">海南省</text>
<circle cx="545.5" cy="403.5" r="15" fill="#6ee8c0" opacity=".35" filter="url(#gl)"/>
<path d="M537.0,397.0 L539.0,393.2 L541.0,391.8 L543.0,392.3 L545.4,389.9 L547.5,390.0 L549.7,388.7 L551.5,391.0 L554.6,394.3 L557.0,393.0 L559.6,393.6 L562.0,397.3 L562.5,400.0 L560.0,402.5 L556.0,405.5 L553.0,410.0 L548.0,414.0 L543.0,414.2 L539.0,412.8 L536.0,414.0 L533.0,417.0 L530.6,419.6 L530.3,416.0 L532.0,412.5 L535.0,409.5 L536.5,404.0Z" fill="#7ff0c8" opacity=".5" filter="url(#gl)"/>
<path d="M537.0,397.0 L539.0,393.2 L541.0,391.8 L543.0,392.3 L545.4,389.9 L547.5,390.0 L549.7,388.7 L551.5,391.0 L554.6,394.3 L557.0,393.0 L559.6,393.6 L562.0,397.3 L562.5,400.0 L560.0,402.5 L556.0,405.5 L553.0,410.0 L548.0,414.0 L543.0,414.2 L539.0,412.8 L536.0,414.0 L533.0,417.0 L530.6,419.6 L530.3,416.0 L532.0,412.5 L535.0,409.5 L536.5,404.0Z" fill="#8aeccb" stroke="#9af0d2" stroke-width="0.5"/>
<circle cx="545.5" cy="403.8" r="10.7" fill="#a2f5d6"/><line x1="545.4" y1="403.5" x2="550.9" y2="396.7" stroke="#62d8c0" stroke-width="1.6" stroke-linecap="round"/>
<circle cx="545.9" cy="403.5" r="22.7" fill="none" stroke="#5cb89a" stroke-width="0.9" opacity=".85"/>
<circle cx="545.9" cy="404" r="38" fill="none" stroke="#3f8a80" stroke-width="0.8" opacity=".45"/>
<circle cx="577.8" cy="353" r="17" fill="none" stroke="#2f8f8e" stroke-width="0.7" opacity=".6"/>
<circle cx="563.6" cy="321.2" r="8.5" fill="none" stroke="#2fa6a0" stroke-width="0.7" opacity=".6"/>
<circle cx="563.1" cy="322.6" r="3.1" fill="#2ee6d0" opacity=".35"/><circle cx="563.1" cy="322.6" r="1.6" fill="#3ff0dc"/>
<circle cx="568.2" cy="345.9" r="3.3" fill="#2ee6d0" opacity=".35"/><circle cx="568.2" cy="345.9" r="1.8" fill="#3ff0dc"/>
<circle cx="575" cy="357.8" r="3.3" fill="#2ee6d0" opacity=".35"/><circle cx="575" cy="357.8" r="1.8" fill="#3ff0dc"/>
<circle cx="548.9" cy="387.4" r="3.3" fill="#2ee6d0" opacity=".35"/><circle cx="548.9" cy="387.4" r="1.8" fill="#3ff0dc"/>
<line x1="527.9" y1="445.5" x2="529.6" y2="451.8" stroke="#1a3a5c" stroke-width="0.7"/>
<line x1="538.6" y1="443.8" x2="542.1" y2="446.4" stroke="#1a3a5c" stroke-width="0.7"/>
<line x1="549.3" y1="446.4" x2="552" y2="448.2" stroke="#1a3a5c" stroke-width="0.7"/>
<line x1="571.6" y1="447.3" x2="572.5" y2="452.7" stroke="#1a3a5c" stroke-width="0.7"/>
<line x1="574.3" y1="428.6" x2="576" y2="433.9" stroke="#1a3a5c" stroke-width="0.7"/>
<line x1="531.4" y1="471.4" x2="532.3" y2="475.9" stroke="#1a3a5c" stroke-width="0.7"/>
<line x1="552" y1="474" x2="552.9" y2="478.6" stroke="#1a3a5c" stroke-width="0.7"/>
<line x1="570.7" y1="471.4" x2="571.6" y2="478.6" stroke="#1a3a5c" stroke-width="0.7"/>
<text x="582" y="402.4" font-size="6.6" fill="#a81414" text-anchor="middle" font-family="Liberation Sans, sans-serif">台湾省</text>
<path d="M581.4,391.3 L584.2,390.1 L585.6,391.9 L584.2,398.0 L581.4,406.6 L580.5,410.9 L577.8,406.6 L577.3,401.7 L578.7,395.6Z" fill="#e8b400" stroke="#c89a00" stroke-width="0.5"/><circle cx="581.6" cy="400" r="1.5" fill="#c81010"/>
<rect x="257.2" y="390" width="8.9" height="66" rx="1" fill="url(#vm)"/>
<rect x="256" y="387.4" width="11.4" height="3.9" rx="1.9" fill="#c9f7e2"/>
<rect x="256.4" y="459.4" width="10.8" height="3.4" rx="1.7" fill="none" stroke="#cfd6de" stroke-width=".8"/>
<text x="261.4" y="380" font-size="8" fill="#cfd6de" text-anchor="middle" font-family="Liberation Sans, sans-serif">多</text>
<text x="271.5" y="392" font-size="8" fill="#cfd6de" font-family="Liberation Sans, sans-serif">81.8万</text>
<text x="272" y="463.5" font-size="8" fill="#cfd6de" font-family="Liberation Sans, sans-serif">0</text>
<text x="261.4" y="474.5" font-size="8" fill="#cfd6de" text-anchor="middle" font-family="Liberation Sans, sans-serif">少</text>
</svg>
</div>

<!-- right panel -->
<div class="abs card" style="left:797px;top:126.5px;width:222px;height:373.5px">
  <svg class="abs" style="left:14px;top:15px" width="9" height="12" viewBox="0 0 9 12"><g fill="none" stroke="#f0a030" stroke-width="1"><circle cx="4.5" cy="4" r="3"/><path d="M2.5 6.5L2 11l2.5-1.2L7 11l-.5-4.5"/></g></svg>
  <div class="abs" style="left:31px;top:14px;font-size:10.5px;font-weight:bold;color:#1f2937;line-height:14px;white-space:nowrap">省份 Top 10</div>
  <div class="abs" style="left:13px;top:36px;width:196px;height:1px;background:#eef1f4"></div>
  <div class="abs row" style="top:51.6px"><div class="rk" style="background:linear-gradient(#fbbf3a,#f0a01a);color:#fff">1</div><div class="pn">广东省</div><div class="trk"><div class="fil" style="width:78.0px;background:linear-gradient(90deg,#f6b52c,#f0a01e)"></div></div><div class="val">817,721 台</div></div>
  <div class="abs row" style="top:77.6px"><div class="rk" style="background:linear-gradient(#96a2b6,#6f7c93);color:#fff">2</div><div class="pn">浙江省</div><div class="trk"><div class="fil" style="width:38.5px;background:linear-gradient(90deg,#9aa5b8,#5f6b82)"></div></div><div class="val">403,315 台</div></div>
  <div class="abs row" style="top:103.6px"><div class="rk" style="background:linear-gradient(#e07a22,#b85a12);color:#fff">3</div><div class="pn">江苏省</div><div class="trk"><div class="fil" style="width:35.1px;background:linear-gradient(90deg,#f6b12e,#d8780e)"></div></div><div class="val">367,648 台</div></div>
  <div class="abs row" style="top:129.6px"><div class="rk" style="background:#eef2f7;color:#8f9cb0">4</div><div class="pn">山东省</div><div class="trk"><div class="fil" style="width:28.1px;background:linear-gradient(90deg,#4fd6e0,#17a0ae)"></div></div><div class="val">294,159 台</div></div>
  <div class="abs row" style="top:155.6px"><div class="rk" style="background:#eef2f7;color:#8f9cb0">5</div><div class="pn">上海市</div><div class="trk"><div class="fil" style="width:25.0px;background:linear-gradient(90deg,#4fd6e0,#17a0ae)"></div></div><div class="val">262,266 台</div></div>
  <div class="abs row" style="top:181.6px"><div class="rk" style="background:#eef2f7;color:#8f9cb0">6</div><div class="pn">河南省</div><div class="trk"><div class="fil" style="width:23.3px;background:linear-gradient(90deg,#4fd6e0,#17a0ae)"></div></div><div class="val">243,938 台</div></div>
  <div class="abs row" style="top:207.6px"><div class="rk" style="background:#eef2f7;color:#8f9cb0">7</div><div class="pn">福建省</div><div class="trk"><div class="fil" style="width:21.8px;background:linear-gradient(90deg,#4fd6e0,#17a0ae)"></div></div><div class="val">228,586 台</div></div>
  <div class="abs row" style="top:233.6px"><div class="rk" style="background:#eef2f7;color:#8f9cb0">8</div><div class="pn">安徽省</div><div class="trk"><div class="fil" style="width:20.7px;background:linear-gradient(90deg,#4fd6e0,#17a0ae)"></div></div><div class="val">216,587 台</div></div>
  <div class="abs row" style="top:259.6px"><div class="rk" style="background:#eef2f7;color:#8f9cb0">9</div><div class="pn">四川省</div><div class="trk"><div class="fil" style="width:20.1px;background:linear-gradient(90deg,#4fd6e0,#17a0ae)"></div></div><div class="val">210,991 台</div></div>
  <div class="abs row" style="top:285.6px"><div class="rk" style="background:#eef2f7;color:#8f9cb0">10</div><div class="pn">湖北省</div><div class="trk"><div class="fil" style="width:19.0px;background:linear-gradient(90deg,#4fd6e0,#17a0ae)"></div></div><div class="val">199,615 台</div></div>
</div>

<div class="abs" style="left:238px;top:517px;font-size:8px;color:#9aa6b6;line-height:11px;white-space:nowrap">数据来源：中国充电联盟</div>
<div class="abs" style="right:72px;top:517px;font-size:8.4px;color:#9aa6b6;line-height:11px;white-space:nowrap">数据更新于 2026-02</div>
</body></html>
